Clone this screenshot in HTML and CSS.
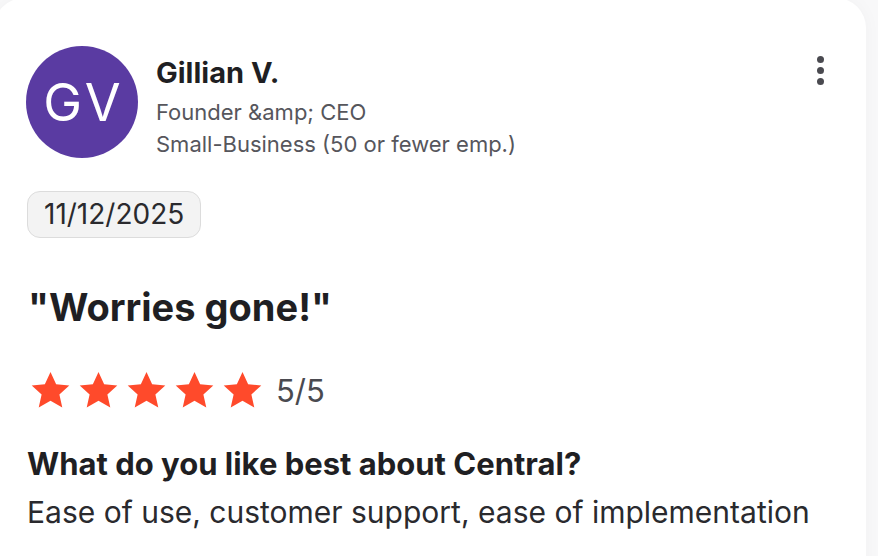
FILE: index.html
```html
<!DOCTYPE html>
<html>
<head>
<meta charset="utf-8">
<link rel="stylesheet" href="styles.css">
</head>
<body>
<div class="page">
  <div class="card">
    <div class="header">
      <div class="avatar">GV</div>
      <div class="who">
        <div class="name">Gillian V.</div>
        <div class="meta first">Founder &amp;amp; CEO</div>
        <div class="meta">Small-Business (50 or fewer emp.)</div>
      </div>
      <div class="kebab"><span></span><span></span><span></span></div>
    </div>
    <div class="date">11/12/2025</div>
    <h1 class="title">"Worries gone!"</h1>
    <div class="rating">
      <svg class="star" viewBox="0 0 24 24"><path d="M12 1.2l3.3 7.1 7.7.8-5.8 5.2 1.7 7.6L12 18l-6.9 3.9 1.7-7.6L1 9.1l7.7-.8z"/></svg>
      <svg class="star" viewBox="0 0 24 24"><path d="M12 1.2l3.3 7.1 7.7.8-5.8 5.2 1.7 7.6L12 18l-6.9 3.9 1.7-7.6L1 9.1l7.7-.8z"/></svg>
      <svg class="star" viewBox="0 0 24 24"><path d="M12 1.2l3.3 7.1 7.7.8-5.8 5.2 1.7 7.6L12 18l-6.9 3.9 1.7-7.6L1 9.1l7.7-.8z"/></svg>
      <svg class="star" viewBox="0 0 24 24"><path d="M12 1.2l3.3 7.1 7.7.8-5.8 5.2 1.7 7.6L12 18l-6.9 3.9 1.7-7.6L1 9.1l7.7-.8z"/></svg>
      <svg class="star" viewBox="0 0 24 24"><path d="M12 1.2l3.3 7.1 7.7.8-5.8 5.2 1.7 7.6L12 18l-6.9 3.9 1.7-7.6L1 9.1l7.7-.8z"/></svg>
      <span class="score">5/5</span>
    </div>
    <div class="q">What do you like best about Central?</div>
    <div class="a">Ease of use, customer support, ease of implementation</div>
  </div>
</div>
</body>
</html>
```

FILE: styles.css
```css
html, body {
  margin: 0;
  padding: 0;
  background: #f8f8f9;
}
body {
  font-family: Inter, "Noto Sans", sans-serif;
  color: #1f1f23;
  width: 878px;
  height: 556px;
  overflow: hidden;
}
.page {
  height: 556px;
  overflow: hidden;
}
.card {
  background: #ffffff;
  width: 872px;
  height: 600px;
  margin-top: -2px;
  margin-left: -6px;
  border-radius: 30px;
  box-shadow: 0 0 18px rgba(0,0,0,0.03);
  box-sizing: border-box;
  padding: 48px 0 0 32px;
}
.header {
  display: flex;
  align-items: flex-start;
}
.avatar {
  width: 112px;
  height: 112px;
  box-sizing: border-box;
  padding-left: 4px;
  border-radius: 50%;
  background: #5a3ba2;
  color: #fff;
  font-size: 52px;
  font-weight: 400;
  display: flex;
  align-items: center;
  justify-content: center;
  letter-spacing: 4px;
  flex: none;
}
.who {
  margin-left: 18px;
  margin-top: 9px;
  flex: 1;
}
.name {
  font-size: 29px;
  font-weight: 700;
  line-height: 36px;
  color: #1f1f23;
}
.meta {
  font-size: 22px;
  line-height: 32px;
  color: #56565c;
}
.meta.first {
  margin-top: 5px;
}
.kebab {
  display: flex;
  flex-direction: column;
  gap: 4px;
  margin-top: 10px;
  margin-right: 42px;
}
.kebab span {
  width: 7px;
  height: 7px;
  border-radius: 50%;
  background: #4a4a50;
}
.date {
  display: inline-block;
  margin-top: 31px;
  margin-left: 1px;
  padding: 0 16px;
  height: 45px;
  line-height: 45px;
  font-size: 28px;
  color: #2a2a2e;
  background: #f3f3f3;
  border: 1px solid #dcdcdc;
  border-radius: 13px;
}
.title {
  margin: 46px 0 0 2px;
  font-size: 38px;
  font-weight: 700;
  line-height: 46px;
  color: #1f1f23;
}
.rating {
  display: flex;
  align-items: center;
  height: 40px;
  margin-top: 40px;
  margin-left: 4px;
}
.star {
  width: 41px;
  height: 41px;
  fill: #ff4a2b;
  margin-right: 7px;
  flex: none;
}
.score {
  font-size: 31px;
  color: #4a4a50;
  margin-left: 6px;
}
.q {
  margin-top: 36px;
  margin-left: 1px;
  font-size: 31px;
  font-weight: 700;
  line-height: 36px;
  color: #1f1f23;
}
.a {
  margin-top: 11px;
  margin-left: 1px;
  font-size: 30px;
  line-height: 38px;
  color: #2a2a2e;
}
```
